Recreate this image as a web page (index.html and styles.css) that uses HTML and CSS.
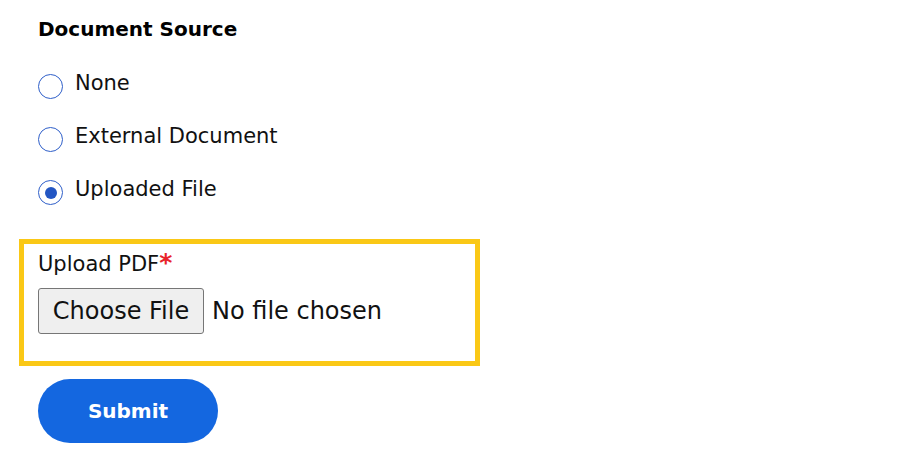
FILE: index.html
```html
<!DOCTYPE html>
<html lang="en">
<head>
<meta charset="utf-8">
<title>Document Source</title>
<link rel="stylesheet" href="styles.css">
</head>
<body>
<main class="form">
  <div class="source">
    <div class="source-title">Document Source</div>
    <div class="options">
      <label class="option"><span class="radio"></span><span class="option-text">None</span></label>
      <label class="option"><span class="radio"></span><span class="option-text">External Document</span></label>
      <label class="option"><span class="radio radio-checked"></span><span class="option-text">Uploaded File</span></label>
    </div>
  </div>
  <div class="upload-box">
    <div class="upload-label">Upload PDF<span class="req">*</span></div>
    <div class="file-row">
      <span class="file-btn">Choose File</span>
      <span class="file-status">No file chosen</span>
    </div>
  </div>
  <button class="submit" type="button">Submit</button>
</main>
</body>
</html>
```
FILE: styles.css
```css
* { box-sizing: border-box; }
body {
  margin: 0;
  background: #ffffff;
  color: #111111;
  font-family: "DejaVu Sans", "Open Sans", sans-serif;
}
.form {
  display: flex;
  flex-direction: column;
  align-items: flex-start;
  padding: 15px 0 0 19px;
}
.source {
  display: flex;
  flex-direction: column;
  padding-left: 19px;
}
.source-title {
  font-size: 20px;
  line-height: 28px;
  font-weight: 700;
  color: #000;
}
.options {
  display: flex;
  flex-direction: column;
  margin-top: 14px;
}
.option {
  display: flex;
  align-items: center;
  height: 53px;
  font-size: 21px;
  line-height: 28px;
}
.option-text {
  margin-top: -2px;
}
.radio {
  width: 25px;
  height: 25px;
  border: 1.5px solid #2f5fc9;
  border-radius: 50%;
  margin-top: 6px;
  margin-right: 12px;
  display: flex;
  align-items: center;
  justify-content: center;
  flex-shrink: 0;
}
.radio-checked::after {
  content: "";
  width: 12px;
  height: 12px;
  border-radius: 50%;
  background: #2356c3;
}
.upload-box {
  margin-top: 23px;
  width: 461px;
  height: 127px;
  border: 5px solid #fac816;
  padding: 6px 14px 0 14px;
}
.upload-label {
  font-size: 21px;
  line-height: 28px;
}
.req {
  color: #e8232b;
  font-size: 25px;
  font-weight: 700;
  line-height: 0;
}
.file-row {
  display: flex;
  align-items: center;
  margin-top: 10px;
}
.file-btn {
  width: 166px;
  height: 46px;
  border: 1px solid #767676;
  border-radius: 3px;
  background: #efefef;
  font-size: 24px;
  display: flex;
  align-items: center;
  justify-content: center;
}
.file-status {
  margin-left: 8px;
  font-size: 24px;
}
.submit {
  margin-top: 13px;
  margin-left: 19px;
  width: 180px;
  height: 64px;
  border: none;
  border-radius: 32px;
  background: #1467e0;
  color: #ffffff;
  font-family: inherit;
  font-size: 20px;
  font-weight: 700;
}
```
